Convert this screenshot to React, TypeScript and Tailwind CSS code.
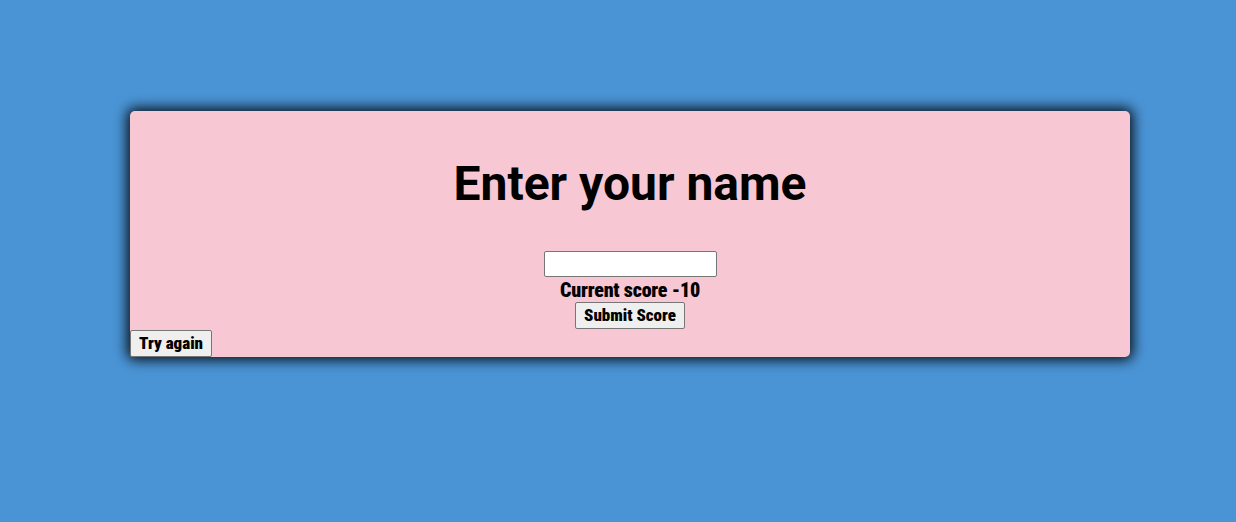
import React from "react";

const heavy = "font-['Roboto',sans-serif] font-black font-stretch-condensed text-black";

export default function App() {
  const [name, setName] = React.useState("");
  const score = -10;

  return (
    <div className="min-h-[522px] w-full bg-[#4a94d6] pt-[111px] pl-[24px]">
      <div className="mx-auto flex w-[1000px] flex-col rounded-[5px] bg-[#f7c7d3] shadow-[0_0_13px_3px_rgba(0,0,0,0.9)]">
        <h1 className="mt-[45px] text-center font-['Roboto',sans-serif] text-[48px] leading-[55px] font-bold text-black">
          Enter your name
        </h1>
        <div className="mt-[40px] flex flex-col items-center">
          <input
            value={name}
            onChange={(e) => setName(e.target.value)}
            className="h-[26px] w-[173px] rounded-[2px] border border-[#767676] bg-white px-1 text-sm outline-none"
          />
          <p className={`${heavy} mt-[1px] h-[24px] text-[20px] leading-[24px] tracking-[-0.2px]`}>
            Current score {score}
          </p>
          <button className={`${heavy} h-[27px] rounded-[2px] border border-[#767676] bg-[#efefef] px-[8px] text-[17px] leading-none`}>
            Submit Score
          </button>
        </div>
        <div className="mt-[1px] flex">
          <button className={`${heavy} h-[27px] rounded-[2px] border border-[#767676] bg-[#efefef] px-[8px] text-[17px] leading-none`}>
            Try again
          </button>
        </div>
      </div>
    </div>
  );
}
